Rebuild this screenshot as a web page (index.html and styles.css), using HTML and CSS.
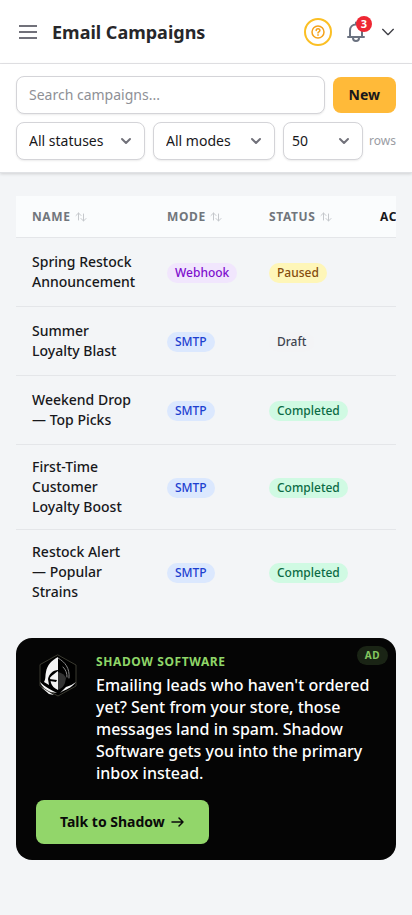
FILE: index.html
```html
<!DOCTYPE html>
<html lang="en">
<head>
<meta charset="utf-8">
<meta name="viewport" content="width=device-width, initial-scale=1">
<title>Email Campaigns</title>
<link rel="stylesheet" href="styles.css">
</head>
<body>
<svg width="0" height="0" class="sprite" aria-hidden="true">
  <symbol id="sort" viewBox="0 0 12 12"><path d="M3.5 9V2M1 4.500 3.500 2 6 4.500M8.500 3v7M6 7.500 8.500 10 11 7.500"/></symbol>
  <symbol id="chevron" viewBox="0 0 12 12"><path d="M2 4l4 4 4-4"/></symbol>
</svg>
<header class="topbar">
  <button class="icon-btn menu" aria-label="Menu"><svg width="18" height="16" viewBox="0 0 18 16"><path d="M0 2h18M0 8h18M0 14h18"/></svg></button>
  <h1>Email Campaigns</h1>
  <button class="icon-btn help" aria-label="Help"><svg width="14" height="14" viewBox="0 0 14 14"><circle cx="7" cy="7" r="6"/><path d="M5.200 5.500c0-2.400 3.700-2.200 3.700 0 0 1.300-1.900 1.300-1.900 2.500"/><path d="M7 9.700v.600"/></svg></button>
  <button class="icon-btn bell" aria-label="Notifications"><svg width="20" height="22" viewBox="0 0 20 22"><path d="M2 16h16M4 16V9.500C4 6 6.500 3.500 10 3.500s6 2.500 6 6V16M10 1.500v2M7 17c0 4 6 4 6 0"/></svg><span class="count">3</span></button>
  <button class="icon-btn more" aria-label="Account"><svg width="12" height="12"><use href="#chevron"/></svg></button>
</header>
<section class="filters">
  <div class="line">
    <input class="field search" type="text" placeholder="Search campaigns..." aria-label="Search campaigns">
    <button class="new">New</button>
  </div>
  <div class="line">
    <div class="picker status"><select class="field" aria-label="Status"><option>All statuses</option></select><svg width="12" height="12"><use href="#chevron"/></svg></div>
    <div class="picker mode"><select class="field" aria-label="Mode"><option>All modes</option></select><svg width="12" height="12"><use href="#chevron"/></svg></div>
    <div class="picker size"><select class="field" id="rows"><option>50</option></select><svg width="12" height="12"><use href="#chevron"/></svg></div>
    <label class="rows" for="rows">rows</label>
  </div>
</section>
<main>
  <div class="scroller">
    <table>
      <colgroup><col class="c-name"><col class="c-mode"><col class="c-status"><col class="c-actions"></colgroup>
      <thead><tr>
        <th>Name <svg width="12" height="12"><use href="#sort"/></svg></th>
        <th>Mode <svg width="12" height="12"><use href="#sort"/></svg></th>
        <th>Status <svg width="12" height="12"><use href="#sort"/></svg></th>
        <th class="plain">Actions</th>
      </tr></thead>
      <tbody>
        <tr><td>Spring Restock Announcement</td><td><span class="tag purple">Webhook</span></td><td><span class="tag yellow">Paused</span></td><td></td></tr>
        <tr><td>Summer Loyalty Blast</td><td><span class="tag blue">SMTP</span></td><td><span class="tag gray">Draft</span></td><td></td></tr>
        <tr><td>Weekend Drop — Top Picks</td><td><span class="tag blue">SMTP</span></td><td><span class="tag green">Completed</span></td><td></td></tr>
        <tr><td>First-Time Customer Loyalty Boost</td><td><span class="tag blue">SMTP</span></td><td><span class="tag green">Completed</span></td><td></td></tr>
        <tr><td>Restock Alert — Popular Strains</td><td><span class="tag blue">SMTP</span></td><td><span class="tag green">Completed</span></td><td></td></tr>
      </tbody>
    </table>
  </div>
  <aside class="promo">
    <span class="ad">AD</span>
    <div class="pitch">
      <svg class="logo" width="44" height="44" viewBox="0 0 44 44" aria-hidden="true">
        <path class="hex" d="M22 1 40 11v21L22 42 4 32V11z"/>
        <path class="lit" d="M22 3v13c-5 0-9 4-10 9l1 6-5-3c2-3 1-6 2-10 1-7 6-12 12-15z"/>
        <path class="lit" d="M22 17v19c-4-2-6-4-7-7l-1-5c1-2 3-3 8-7z"/>
        <path class="dim" d="M22 18c4 1 7 3 8 6l-1 5c-1 3-3 5-7 7z"/>
        <path class="hood" d="M22 4c7 4 12 10 11 20M27 13c3 3 4 6 4 10"/>
        <path class="black" d="M13 25l8 1-1 2-6-1z"/>
        <path class="lit" d="M4 28c5 5 11 8 17 11l-6-1C10 36 6 33 4 28zM5 33l13 8-5-1zM40 28c-4 5-8 7-13 9l-3 2 6-6c4-1 7-3 10-5z"/>
      </svg>
      <div>
        <p class="brand">Shadow Software</p>
        <p class="copy">Emailing leads who haven't ordered yet? Sent from your store, those messages land in spam. Shadow Software gets you into the primary inbox instead.</p>
      </div>
    </div>
    <a class="cta" href="#">Talk to Shadow <svg width="14" height="12" viewBox="0 0 14 12"><path d="M1 6h11M8 2l4 4-4 4"/></svg></a>
  </aside>
</main>
</body>
</html>
```
FILE: styles.css
```css
* { box-sizing: border-box; }
body {
  margin: 0;
  background: #f3f5f7;
  color: #18181b;
  font: 14px/20px "Noto Sans", sans-serif;
}
h1, p { margin: 0; }
button, input, select { font: inherit; color: inherit; }
button { border: 0; padding: 0; cursor: pointer; }
svg { fill: none; stroke: currentColor; stroke-linecap: round; stroke-linejoin: round; flex: none; }
.sprite { position: absolute; }

.topbar {
  display: flex;
  align-items: center;
  height: 64px;
  padding: 0 16px;
  background: #fff;
  border-bottom: 1px solid #e4e4e7;
}
.icon-btn { display: grid; place-items: center; background: none; color: #71717a; }
.menu { width: 24px; height: 24px; margin-right: 12px; stroke-width: 2; }
.menu svg { stroke-linecap: butt; }
h1 { flex: 1; font-size: 18px; line-height: 28px; font-weight: 700; color: #27272a; }
.help { width: 28px; height: 28px; border: 2px solid #fbbf24; border-radius: 50%; color: #f5a11a; stroke-width: 1.5; }
.bell { position: relative; width: 20px; height: 24px; margin: 0 14px; stroke-width: 2; color: #6b7280; }
.count {
  position: absolute;
  top: -4px;
  right: -6px;
  width: 16px;
  height: 16px;
  border-radius: 50%;
  background: #ee2733;
  color: #fff;
  font-size: 11px;
  line-height: 16px;
  font-weight: 700;
}
.more { width: 16px; height: 16px; color: #3f3f46; stroke-width: 1; }
.more svg { width: 16px; height: 16px; }

.filters {
  display: grid;
  gap: 8px;
  padding: 12px 16px;
  background: #fff;
  border-bottom: 1px solid #e0e2e5;
  box-shadow: 0 1px 3px rgba(0, 0, 0, .15);
}
.line { display: flex; align-items: center; gap: 8px; }
.field {
  width: 100%;
  height: 38px;
  padding: 0 12px;
  border: 1px solid #d4d4d8;
  border-radius: 8px;
  background: #fff;
  box-shadow: 0 1px 2px rgba(0, 0, 0, .08);
  appearance: none;
}
.search { flex: 1; min-width: 0; padding-bottom: 2px; }
.search::placeholder { color: #8e9096; opacity: 1; }
.new { height: 36px; padding: 0 16px; border-radius: 8px; background: #ffba39; font-weight: 700; }
.picker { display: grid; align-items: center; }
.picker > * { grid-area: 1 / 1; }
.picker svg { justify-self: end; margin-right: 13px; color: #71717a; stroke-width: 2; pointer-events: none; }
.status { flex: 129; }
.mode { flex: 122; }
.size { flex: 80; }
.size .field { padding: 0 8px; }
.rows { margin-left: -2px; font-size: 12px; color: #9a9ca3; }

main { padding: 23px 16px 24px; }
.scroller { overflow: hidden; }
table { width: 480px; table-layout: fixed; border-collapse: separate; border-spacing: 0; }
.c-name { width: 135px; }
.c-mode { width: 102px; }
.c-status { width: 111px; }
th, td { padding: 12px 16px; text-align: left; border-bottom: 1px solid #e4e6e9; }
th {
  padding: 0 16px;
  height: 42px;
  background: #fafcfd;
  color: #71767c;
  font-size: 12px;
  line-height: 16px;
  font-weight: 700;
  letter-spacing: .05em;
  text-transform: uppercase;
  white-space: nowrap;
}
th svg { margin-left: 1px; vertical-align: -2px; color: #c5c8cc; }
th.plain { color: #18181b; }
td { height: 69px; font-weight: 500; }
td:first-child { padding-right: 14px; }
tbody tr:last-child td { border-bottom: 0; }
.tag {
  display: inline-block;
  padding: 2px 8px;
  border-radius: 10px;
  font-size: 12px;
  line-height: 16px;
  vertical-align: middle;
}
.purple { background: #f1e6fd; color: #7e0fce; }
.yellow { background: #fef6b8; color: #854d0e; }
.blue { background: #dbe8fe; color: #1d40d0; }
.green { background: #d0fae3; color: #0b6b45; }
.gray { background: #f3f4f6; color: #3f4550; }

.promo {
  position: relative;
  margin-top: 24px;
  padding: 16px 20px;
  border-radius: 16px;
  background: #050505;
  color: #fff;
}
.pitch { display: flex; gap: 16px; }
.brand {
  font-size: 12px;
  line-height: 16px;
  font-weight: 700;
  letter-spacing: .05em;
  text-transform: uppercase;
  color: #8fd668;
}
.copy { margin-top: 4px; font-size: 16px; line-height: 22px; font-weight: 500; }
.logo { stroke: none; }
.hex { fill: #000; stroke: #3a3a30; stroke-width: 1; }
.lit { fill: #f4f4f4; }
.dim { fill: #333; }
.hood { stroke: #8a8a8a; stroke-width: 1; }
.black { fill: #000; }
.ad {
  position: absolute;
  top: 8px;
  right: 8px;
  padding: 2px 8px;
  border-radius: 10px;
  background: #1a2415;
  color: #84c860;
  font-size: 10px;
  line-height: 15px;
  font-weight: 700;
  letter-spacing: .05em;
}
.cta {
  display: inline-flex;
  align-items: center;
  gap: 6px;
  height: 44px;
  margin-top: 16px;
  padding: 0 24px;
  border-radius: 8px;
  background: #92d66a;
  color: #0a0a0a;
  font-weight: 700;
  text-decoration: none;
  vertical-align: top;
  stroke-width: 1.5;
}
```
